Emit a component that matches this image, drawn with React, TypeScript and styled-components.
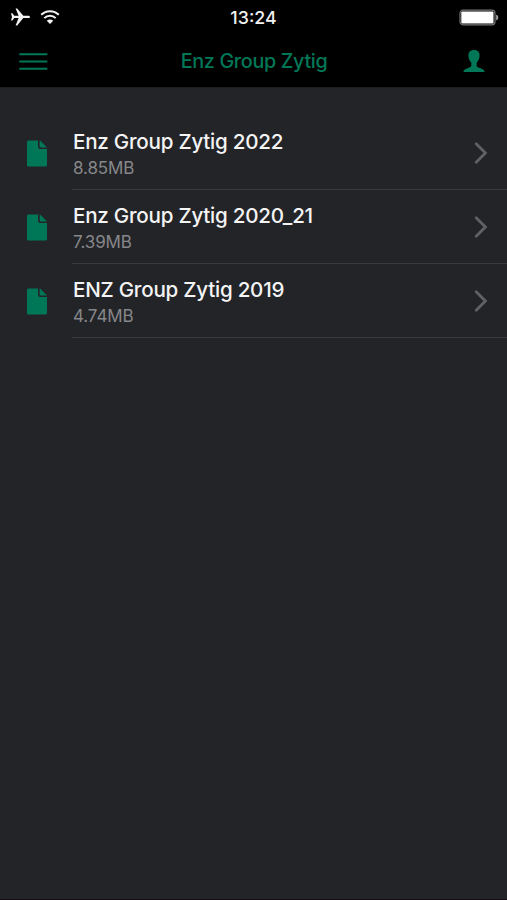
import React from 'react';
import styled, { createGlobalStyle } from 'styled-components';

const GREEN = '#007858';

const GlobalStyle = createGlobalStyle`
  * { box-sizing: border-box; }
  body { margin: 0; background: #232428; }
`;

const Screen = styled.div`
  display: flex;
  flex-direction: column;
  width: 100%;
  height: 900px;
  overflow: hidden;
  background: #232428;
  border-bottom: 1px solid #150b12;
  font-family: Inter, "Liberation Sans", sans-serif;
`;

const StatusBar = styled.div`
  display: grid;
  grid-template-columns: 1fr auto 1fr;
  align-items: center;
  height: 35px;
  padding: 0 8px 0 10px;
  background: #000;
  color: #f2f2f2;
  flex: none;
`;

const StatusLeft = styled.div`
  display: flex;
  align-items: center;
  gap: 9px;
  margin-top: -1px;
`;

const StatusRight = styled.div`
  display: flex;
  justify-content: flex-end;
`;

const Clock = styled.time`
  margin-right: 2px;
  font-size: 17.8px;
  line-height: 35px;
  font-weight: 450;
`;

const NavBar = styled.header`
  display: grid;
  grid-template-columns: 1fr auto 1fr;
  align-items: center;
  height: 53px;
  padding: 0 22px 0 19px;
  background: #000;
  color: ${GREEN};
  border-bottom: 1px solid #1c1d20;
  flex: none;
`;

const NavButton = styled.button<{ $end?: boolean }>`
  display: flex;
  padding: 0;
  border: 0;
  background: none;
  color: inherit;
  justify-self: ${(p) => (p.$end ? 'end' : 'start')};
`;

const NavTitle = styled.h1`
  margin: 0 0 0 4px;
  font-size: 19.8px;
  line-height: 28px;
  font-weight: 500;
  letter-spacing: -0.35px;
`;

const FileList = styled.ul`
  list-style: none;
  margin: 28px 0 0;
  padding: 0;
`;

const FileRow = styled.li`
  display: flex;
  align-items: stretch;
  height: 74px;
  padding-left: 26px;
`;

const FileIconBox = styled.div`
  display: flex;
  align-items: center;
  width: 46px;
  padding-top: 2px;
`;

const RowBody = styled.div`
  flex: 1;
  display: flex;
  align-items: center;
  justify-content: space-between;
  padding: 0 19px 0 1px;
  border-bottom: 1px solid #393a3d;
`;

const FileText = styled.div`
  display: flex;
  flex-direction: column;
  padding-top: 6px;
`;

const FileName = styled.span`
  font-size: 20.6px;
  line-height: 25px;
  font-weight: 450;
  letter-spacing: -0.24px;
  color: #f4f4f5;
`;

const FileSize = styled.span`
  font-size: 17px;
  line-height: 28px;
  letter-spacing: -0.1px;
  color: #86878a;
`;

const files = [
  { name: 'Enz Group Zytig 2022', size: '8.85MB' },
  { name: 'Enz Group Zytig 2020_21', size: '7.39MB' },
  { name: 'ENZ Group Zytig 2019', size: '4.74MB' },
];

const Airplane = () => (
  <svg width="21" height="18" viewBox="0 0 21 18" fill="currentColor">
    <path d="M20 8.9c0-.8-.9-1.2-2.2-1.2h-4.5L7.2.4H5.6l3 7.3H4.3L2.4 5.2H1l1 3.7-1 3.6h1.4l1.9-2.4h4.3l-3 7.3h1.6l6.1-7.3h4.5c1.3 0 2.2-.4 2.2-1.2z" />
  </svg>
);

const Wifi = () => (
  <svg width="20" height="16" viewBox="0 0 20 16" fill="none" stroke="currentColor" strokeWidth="2">
    <path d="M1.2 5.8a12.4 12.4 0 0 1 17.6 0M4.3 9.1a8 8 0 0 1 11.4 0" />
    <path d="M6.8 11.8a4.5 4.5 0 0 1 6.4 0L10 15z" fill="currentColor" stroke="none" />
  </svg>
);

const Battery = () => (
  <svg width="40" height="17" viewBox="0 0 40 17">
    <rect x="1" y="1.2" width="35" height="14.6" rx="3" fill="none" stroke="#777" strokeWidth="1.2" />
    <rect x="2.3" y="2.5" width="32.2" height="12" rx="1" fill="#fff" />
    <path d="M37.2 5.7c1.4.3 2 1.4 2 2.8s-.6 2.5-2 2.8z" fill="#a5a5a5" />
  </svg>
);

const Menu = () => (
  <svg width="29" height="19" viewBox="0 0 29 19" stroke="currentColor" strokeWidth="2.1">
    <path d="M.3 2.2h28M.3 9.5h28M.3 16.7h28" />
  </svg>
);

const Person = () => (
  <svg width="22" height="23" viewBox="0 0 23 23" fill="currentColor" preserveAspectRatio="none">
    <path d="M11.5 0C7.4 0 5.5 2.3 5.7 5.7c.1 3.3 1.6 5.6 3 7v3c0 1-1.2 1.7-3.3 2.4C2.4 19.2.9 19.6.4 21.9h22.2c-.5-2.3-2-2.7-5-3.8-2.1-.7-3.3-1.4-3.3-2.4v-3c1.4-1.4 2.9-3.7 3-7C17.5 2.3 15.6 0 11.5 0z" />
  </svg>
);

const FileIcon = () => (
  <svg width="22" height="28" viewBox="0 0.4 22 28" fill={GREEN}>
    <path d="M2.7 1H12v5.3c0 2.2 1 3.2 3.2 3.2H21v15.8c0 1.2-.6 1.7-1.7 1.7H2.7C1.6 27 1 26.5 1 25.3V2.7C1 1.5 1.6 1 2.7 1z" />
    <path d="M13.6 1h.5L21 7.9h-5.4c-1.4 0-2-.6-2-2z" />
  </svg>
);

const Chevron = () => (
  <svg width="14" height="24" viewBox="0 0 14 24" fill="none" stroke="#606164" strokeWidth="2.8" strokeLinecap="round" strokeLinejoin="miter">
    <path d="M2.2 2.8 11.4 12 2.2 21.2" />
  </svg>
);

export default function App() {
  return (
    <>
      <GlobalStyle />
      <Screen>
        <StatusBar>
          <StatusLeft>
            <Airplane />
            <Wifi />
          </StatusLeft>
          <Clock>13:24</Clock>
          <StatusRight>
            <Battery />
          </StatusRight>
        </StatusBar>
        <NavBar>
          <NavButton aria-label="Menu"><Menu /></NavButton>
          <NavTitle>Enz Group Zytig</NavTitle>
          <NavButton $end aria-label="Account"><Person /></NavButton>
        </NavBar>
        <FileList>
          {files.map((file) => (
            <FileRow key={file.name}>
              <FileIconBox><FileIcon /></FileIconBox>
              <RowBody>
                <FileText>
                  <FileName>{file.name}</FileName>
                  <FileSize>{file.size}</FileSize>
                </FileText>
                <Chevron />
              </RowBody>
            </FileRow>
          ))}
        </FileList>
      </Screen>
    </>
  );
}
